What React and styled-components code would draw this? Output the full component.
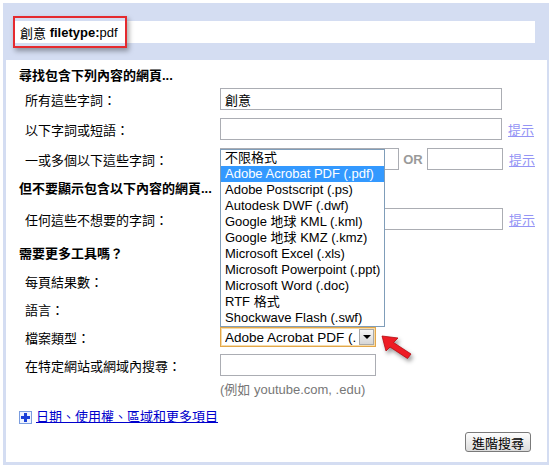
import React from 'react';
import styled, { createGlobalStyle } from 'styled-components';

const GlobalStyle = createGlobalStyle`
  body {
    margin: 0;
    background: #fff;
    font-family: 'Liberation Sans', 'Noto Sans CJK TC', sans-serif;
    font-size: 13px;
    color: #000;
  }
`;

const Frame = styled.div`
  margin: 3px 0 0 3px;
  width: 546px;
  height: 462px;
  box-sizing: border-box;
  background: #d4ddf2;
  padding: 0 2px 3px 3px;
  display: flex;
  flex-direction: column;
`;

const TopBar = styled.div`
  height: 57px;
  box-sizing: border-box;
  padding: 18px 12px 0 7px;
`;

const SearchBox = styled.div`
  position: relative;
  height: 22px;
  background: #fff;
  display: flex;
  align-items: center;
  padding-left: 7px;
`;

const Highlight = styled.div`
  position: absolute;
  left: 0;
  top: -5px;
  width: 114px;
  height: 32px;
  box-sizing: border-box;
  border: 2px solid #e52a2f;
  box-shadow: 2px 3px 5px rgba(0, 0, 0, 0.35);
  pointer-events: none;
`;

const Panel = styled.div`
  flex: 1;
  background: #fff;
  padding: 8px 16px 10px 13px;
  display: flex;
  flex-direction: column;
`;

const Heading = styled.div`
  font-weight: bold;
  white-space: nowrap;
  line-height: ${(p) => p.$line || 16}px;
  padding-top: ${(p) => p.$top || 0}px;
  margin-bottom: ${(p) => p.$bottom || 0}px;
`;

const Row = styled.div`
  display: flex;
  align-items: center;
  height: ${(p) => p.$h || 30}px;
  white-space: nowrap;
`;

const Label = styled.div`
  width: 195px;
  padding-left: 6px;
  flex-shrink: 0;
`;

const TextInput = styled.div`
  width: ${(p) => p.$w}px;
  height: 22px;
  box-sizing: border-box;
  border: 1px solid #abadb3;
  background: #fff;
  display: flex;
  align-items: center;
  padding-left: 4px;
  flex-shrink: 0;
`;

const Hint = styled.a`
  color: #9494f5;
  text-decoration: underline;
  margin-left: 6px;
  cursor: pointer;
  flex-shrink: 0;
`;

const Or = styled.span`
  color: #9a9a9a;
  font-weight: bold;
  width: 28px;
  flex-shrink: 0;
  text-align: center;
`;

const SelectWrap = styled.div`
  position: relative;
`;

const Select = styled.div`
  width: 156px;
  height: 20px;
  box-sizing: border-box;
  border: 1px solid #e3a74a;
  box-shadow: inset 0 0 0 1px #f6dcaa;
  display: flex;
  align-items: center;
  padding-left: 4px;
  white-space: nowrap;
`;

const SelectText = styled.span`
  flex: 1;
  overflow: hidden;
  font-size: 13.5px;
`;

const ArrowBtn = styled.span`
  width: 15px;
  height: 16px;
  box-sizing: border-box;
  margin: 0 1px 0 2px;
  border: 1px solid #a9a9a9;
  background: linear-gradient(#f6f6f6, #d6d6d6);
  display: flex;
  align-items: center;
  justify-content: center;
  flex-shrink: 0;

  &::after {
    content: '';
    border-left: 4px solid transparent;
    border-right: 4px solid transparent;
    border-top: 4px solid #000;
  }
`;

const DropList = styled.ul`
  position: absolute;
  left: 0;
  bottom: 100%;
  width: 163px;
  margin: 0;
  padding: 0;
  list-style: none;
  background: #fff;
  border: 1px solid #7f9db9;
  z-index: 2;
`;

const Option = styled.li`
  height: 16px;
  line-height: 16px;
  padding-left: 4px;
  white-space: nowrap;
  background: ${(p) => (p.$active ? '#3399ff' : '#fff')};
  color: ${(p) => (p.$active ? '#fff' : '#000')};
`;

const RedArrow = styled.svg`
  position: absolute;
  left: 160px;
  top: 7px;
  filter: drop-shadow(2px 3px 2px rgba(0, 0, 0, 0.4));
`;

const Example = styled.div`
  color: #777;
  height: 22px;
  line-height: 22px;
  padding-left: 201px;
`;

const MoreRow = styled.div`
  display: flex;
  align-items: center;
  gap: 4px;
  padding-top: 8px;
  line-height: 16px;
`;

const PlusIcon = styled.span`
  width: 13px;
  height: 13px;
  box-sizing: border-box;
  border: 1px solid #7b9ddf;
  background: #eef3ff;
  display: inline-flex;
  align-items: center;
  justify-content: center;
`;

const MoreLink = styled.a`
  color: #0000cc;
  text-decoration: underline;
  cursor: pointer;
`;

const ButtonRow = styled.div`
  display: flex;
  justify-content: flex-end;
  margin-top: 7px;
`;

const Button = styled.button`
  width: 66px;
  height: 20px;
  padding: 0;
  font: inherit;
  font-size: 13px;
  border: 1px solid #7a7a7a;
  border-radius: 3px;
  background: linear-gradient(#fdfdfd, #dcdcdc);
`;

const fileTypes = [
  '不限格式',
  'Adobe Acrobat PDF (.pdf)',
  'Adobe Postscript (.ps)',
  'Autodesk DWF (.dwf)',
  'Google 地球 KML (.kml)',
  'Google 地球 KMZ (.kmz)',
  'Microsoft Excel (.xls)',
  'Microsoft Powerpoint (.ppt)',
  'Microsoft Word (.doc)',
  'RTF 格式',
  'Shockwave Flash (.swf)',
];

const App = () => (
  <>
    <GlobalStyle />
    <Frame>
      <TopBar>
        <SearchBox>
          創意&nbsp;<b>filetype:</b>pdf
          <Highlight />
        </SearchBox>
      </TopBar>
      <Panel>
        <Heading>尋找包含下列內容的網頁...</Heading>
        <Row>
          <Label>所有這些字詞：</Label>
          <TextInput $w={282}>創意</TextInput>
        </Row>
        <Row>
          <Label>以下字詞或短語：</Label>
          <TextInput $w={282} />
          <Hint>提示</Hint>
        </Row>
        <Row>
          <Label>一或多個以下這些字詞：</Label>
          <TextInput $w={179} />
          <Or>OR</Or>
          <TextInput $w={76} />
          <Hint>提示</Hint>
        </Row>
        <Heading $line={30}>但不要顯示包含以下內容的網頁...</Heading>
        <Row>
          <Label>任何這些不想要的字詞：</Label>
          <TextInput $w={283} />
          <Hint>提示</Hint>
        </Row>
        <Heading $top={12} $bottom={5}>
          需要更多工具嗎？
        </Heading>
        <Row $h={28}>
          <Label>每頁結果數：</Label>
        </Row>
        <Row $h={28}>
          <Label>語言：</Label>
        </Row>
        <Row $h={28}>
          <Label>檔案類型：</Label>
          <SelectWrap>
            <DropList>
              {fileTypes.map((t, i) => (
                <Option key={t} $active={i === 1}>
                  {t}
                </Option>
              ))}
            </DropList>
            <Select>
              <SelectText>Adobe Acrobat PDF (.</SelectText>
              <ArrowBtn />
            </Select>
            <RedArrow width='36' height='28' viewBox='0 0 36 28'>
              <polygon
                points='2,2 18,4 13.5,8.5 31,20 27.5,24.5 10,13 6,17'
                fill='#ee1c24'
                stroke='#b5090f'
                strokeWidth='0.8'
                strokeLinejoin='round'
              />
            </RedArrow>
          </SelectWrap>
        </Row>
        <Row $h={28}>
          <Label>在特定網站或網域內搜尋：</Label>
          <TextInput $w={156} />
        </Row>
        <Example>(例如 youtube.com, .edu)</Example>
        <MoreRow>
          <PlusIcon>
            <svg width='9' height='9' viewBox='0 0 9 9'>
              <rect x='3' y='0' width='3' height='9' fill='#1a3fd8' />
              <rect x='0' y='3' width='9' height='3' fill='#1a3fd8' />
            </svg>
          </PlusIcon>
          <MoreLink>日期、使用權、區域和更多項目</MoreLink>
        </MoreRow>
        <ButtonRow>
          <Button>進階搜尋</Button>
        </ButtonRow>
      </Panel>
    </Frame>
  </>
);

export default App;
